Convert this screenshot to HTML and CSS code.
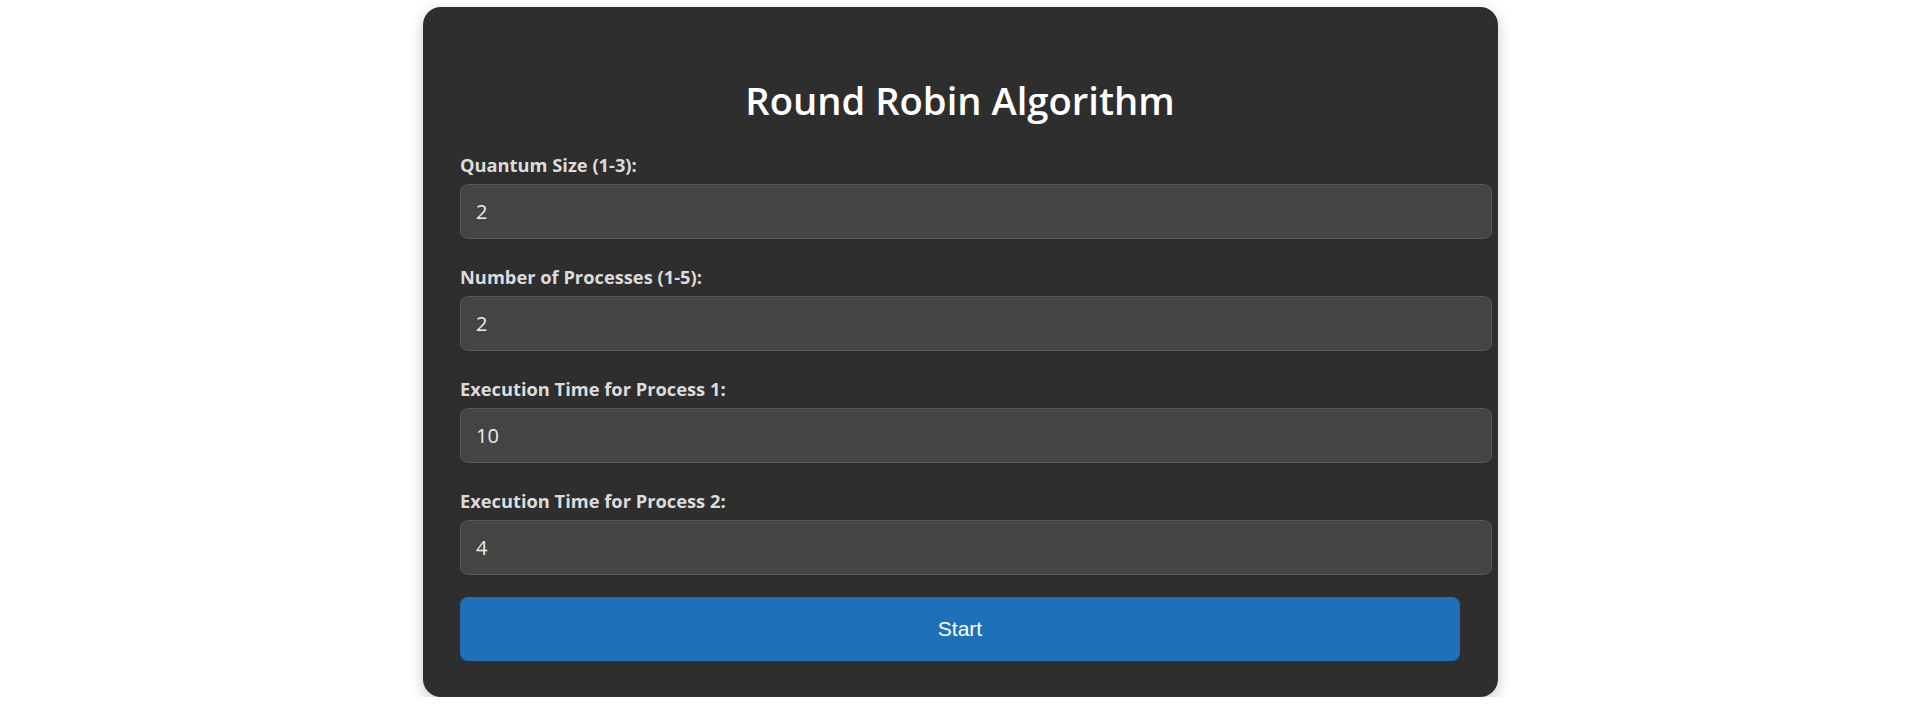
FILE: index.html
```html
<!DOCTYPE html>
<html>
<head>
<meta charset="utf-8">
<title>Round Robin Algorithm</title>
<link rel="stylesheet" href="styles.css">
</head>
<body>
<main class="card">
  <h1 class="title">Round Robin Algorithm</h1>
  <div class="fields">
    <div class="field">
      <label class="label" for="q">Quantum Size (1-3):</label>
      <input class="input" id="q" type="text" value="2">
    </div>
    <div class="field">
      <label class="label" for="n">Number of Processes (1-5):</label>
      <input class="input" id="n" type="text" value="2">
    </div>
    <div class="field">
      <label class="label" for="p1">Execution Time for Process 1:</label>
      <input class="input" id="p1" type="text" value="10">
    </div>
    <div class="field">
      <label class="label" for="p2">Execution Time for Process 2:</label>
      <input class="input" id="p2" type="text" value="4">
    </div>
  </div>
  <button class="start" type="button">Start</button>
</main>
</body>
</html>
```
FILE: styles.css
```css
html, body {
  margin: 0;
  padding: 0;
  background: #ffffff;
}
body {
  display: flex;
  justify-content: center;
  padding: 7px 0 0 16px;
  font-family: "Open Sans", "Noto Sans", sans-serif;
}
.card {
  width: 1000px;
  padding: 65px 38px 36px 37px;
  background: #2e2e2e;
  border-radius: 18px;
  box-shadow: 0 4px 14px rgba(0, 0, 0, 0.22);
}
.title {
  margin: 0 0 26px 0;
  text-align: center;
  color: #ffffff;
  font-size: 38.2px;
  font-weight: 600;
  line-height: 56px;
}
.fields {
  display: flex;
  flex-direction: column;
  gap: 27px;
}
.label {
  display: block;
  color: #dcdcdc;
  font-size: 18.3px;
  font-weight: 700;
  line-height: 22px;
  margin-bottom: 8px;
}
.input {
  display: block;
  box-sizing: border-box;
  width: calc(100% + 32px);
  height: 55px;
  margin: 0;
  padding: 0 15px;
  background: #444444;
  border: 1px solid #575757;
  border-radius: 8px;
  color: #ececec;
  font-family: "Open Sans", "Noto Sans", sans-serif;
  font-size: 20px;
  outline: none;
}
.start {
  display: block;
  width: 100%;
  height: 64px;
  margin-top: 22px;
  background: #1e71b8;
  border: none;
  border-radius: 8px;
  color: #ffffff;
  font-family: "Liberation Sans", Arial, sans-serif;
  font-size: 21px;
}
```
